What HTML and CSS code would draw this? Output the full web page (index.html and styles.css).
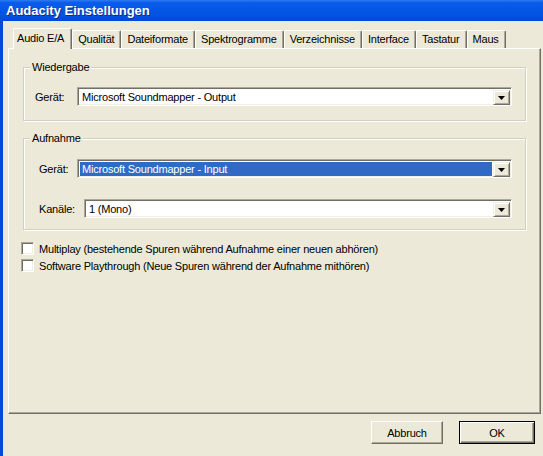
FILE: index.html
```html
<!DOCTYPE html>
<html lang="de">
<head>
<meta charset="utf-8">
<title>Audacity Einstellungen</title>
<link rel="stylesheet" href="styles.css">
</head>
<body>
<div class="window">
  <div class="titlebar"><span class="title">Audacity Einstellungen</span></div>
  <div class="frame">
    <div class="client">
      <div class="tabs">
        <div class="tab active">Audio E/A</div>
        <div class="tab">Qualität</div>
        <div class="tab">Dateiformate</div>
        <div class="tab">Spektrogramme</div>
        <div class="tab">Verzeichnisse</div>
        <div class="tab">Interface</div>
        <div class="tab">Tastatur</div>
        <div class="tab">Maus</div>
      </div>
      <div class="panel">
        <div class="group group-play">
          <div class="legend">Wiedergabe</div>
          <div class="row row-play">
            <span class="label">Gerät:</span>
            <div class="combo">
              <span class="value">Microsoft Soundmapper - Output</span>
              <span class="drop"><svg width="7" height="4" viewBox="0 0 7 4"><path d="M0 0h7L3.5 4z" fill="#000"/></svg></span>
            </div>
          </div>
        </div>
        <div class="group group-rec">
          <div class="legend">Aufnahme</div>
          <div class="row row-rec">
            <span class="label">Gerät:</span>
            <div class="combo">
              <span class="value selected">Microsoft Soundmapper - Input</span>
              <span class="drop"><svg width="7" height="4" viewBox="0 0 7 4"><path d="M0 0h7L3.5 4z" fill="#000"/></svg></span>
            </div>
          </div>
          <div class="row row-chan">
            <span class="label">Kanäle:</span>
            <div class="combo">
              <span class="value">1 (Mono)</span>
              <span class="drop"><svg width="7" height="4" viewBox="0 0 7 4"><path d="M0 0h7L3.5 4z" fill="#000"/></svg></span>
            </div>
          </div>
        </div>
        <div class="checks">
          <div class="check"><span class="box"></span><span>Multiplay (bestehende Spuren während Aufnahme einer neuen abhören)</span></div>
          <div class="check"><span class="box"></span><span>Software Playthrough (Neue Spuren während der Aufnahme mithören)</span></div>
        </div>
      </div>
      <div class="buttons">
        <button class="btn btn-cancel">Abbruch</button>
        <button class="btn btn-ok">OK</button>
      </div>
    </div>
  </div>
</div>
</body>
</html>
```

FILE: styles.css
```css
* { box-sizing: border-box; }
html, body {
  margin: 0;
  padding: 0;
  background: #ECE9D8;
}
body {
  font-family: "Liberation Sans", Arial, sans-serif;
  font-size: 11px;
  letter-spacing: -0.2px;
  color: #000;
}
.window {
  width: 543px;
  height: 456px;
  overflow: hidden;
  display: flex;
  flex-direction: column;
}
.titlebar {
  height: 21px;
  flex: none;
  padding-left: 6px;
  background: linear-gradient(to bottom, #2F7BF2 0%, #0A5DEA 12%, #0657E6 40%, #0453E2 70%, #0348D6 100%);
  display: flex;
  align-items: center;
}
.title {
  color: #fff;
  font-family: "Liberation Sans", Arial, sans-serif;
  font-weight: bold;
  font-size: 13px;
  letter-spacing: 0;
  text-shadow: 1px 1px 0 #0A2A8C;
}
.frame {
  flex: 1;
  min-width: 0;
  display: flex;
  border-left: 3px solid #0A47D8;
}
.client {
  flex: 1;
  min-width: 0;
  padding: 7px 0 0 5px;
  display: flex;
  flex-direction: column;
}
.tabs {
  display: flex;
  align-items: flex-end;
  padding-left: 5px;
  height: 20px;
}
.tab {
  height: 18px;
  line-height: 17px;
  padding: 0 6px 0 5px;
  border-top: 1px solid #fff;
  border-left: 1px solid #fff;
  border-right: 1px solid #716F64;
  box-shadow: inset -1px 0 0 #ACA899;
  border-radius: 2px 2px 0 0;
  white-space: nowrap;
}
.tab.active {
  height: 21px;
  line-height: 19px;
  padding: 0 7px 0 3px;
  margin-bottom: -1px;
  background: #ECE9D8;
  position: relative;
  z-index: 1;
}
.panel {
  width: 533px;
  flex: none;
  height: 366px;
  border-top: 1px solid #fff;
  border-left: 1px solid #fff;
  border-right: 1px solid #716F64;
  border-bottom: 1px solid #716F64;
  box-shadow: inset -1px -1px 0 #ACA899;
  padding: 18px 14px 0 14px;
}
.group {
  border: 1px solid #D0D0BF;
  box-shadow: inset 1px 1px 0 #fff, 1px 1px 0 #fff;
}
.group-play {
  height: 54px;
}
.group-rec {
  height: 92px;
  margin-top: 17px;
}
.legend {
  width: fit-content;
  height: 13px;
  line-height: 13px;
  margin: -7px 0 0 6px;
  padding: 0 2px;
  background: #ECE9D8;
}
.row {
  display: flex;
  align-items: center;
  height: 19px;
  padding-right: 13px;
}
.row-play { margin-top: 13px; padding-left: 11px; }
.row-play .label { width: 42px; }
.row-rec { margin-top: 14px; padding-left: 15px; }
.row-rec .label { width: 38px; }
.row-chan { margin-top: 21px; padding-left: 15px; }
.row-chan .label { width: 45px; }
.combo {
  flex: 1;
  height: 19px;
  display: flex;
  background: #fff;
  border-top: 1px solid #ACA899;
  border-left: 1px solid #ACA899;
  border-right: 1px solid #fff;
  border-bottom: 1px solid #fff;
  box-shadow: inset 1px 1px 0 #716F64, inset -1px -1px 0 #F1EFE2;
  padding: 2px 1px 1px 2px;
}
.value {
  flex: 1;
  line-height: 15px;
  padding-left: 2px;
  white-space: nowrap;
}
.value.selected {
  background: #316AC5;
  color: #fff;
  margin-right: 1px;
}
.drop {
  width: 17px;
  height: 15px;
  background: #ECE9D8;
  border-top: 1px solid #F1EFE2;
  border-left: 1px solid #F1EFE2;
  border-right: 1px solid #716F64;
  border-bottom: 1px solid #716F64;
  box-shadow: inset 1px 1px 0 #fff, inset -1px -1px 0 #ACA899;
  display: flex;
  align-items: center;
  justify-content: center;
}
.drop svg { display: block; margin-top: 1px; }
.checks {
  margin-top: 12px;
  margin-left: -2px;
  display: flex;
  flex-direction: column;
  gap: 4px;
}
.check {
  display: flex;
  align-items: center;
  height: 13px;
  gap: 5px;
  white-space: nowrap;
}
.box {
  width: 13px;
  height: 13px;
  flex: none;
  background: #fff;
  border-top: 1px solid #ACA899;
  border-left: 1px solid #ACA899;
  border-right: 1px solid #fff;
  border-bottom: 1px solid #fff;
  box-shadow: inset 1px 1px 0 #716F64, inset -1px -1px 0 #F1EFE2;
}
.buttons {
  display: flex;
  justify-content: flex-end;
  gap: 16px;
  margin-top: 7px;
  padding-right: 8px;
}
.btn {
  height: 23px;
  font-family: "Liberation Sans", Arial, sans-serif;
  font-size: 11px;
  letter-spacing: -0.2px;
  color: #000;
  background: #ECE9D8;
  border-top: 1px solid #fff;
  border-left: 1px solid #fff;
  border-right: 1px solid #716F64;
  border-bottom: 1px solid #716F64;
  box-shadow: inset -1px -1px 0 #ACA899;
  padding: 0;
}
.btn-cancel { width: 72px; }
.btn-ok {
  width: 76px;
  border: 1px solid #000;
  box-shadow: inset 1px 1px 0 #fff, inset -1px -1px 0 #716F64, inset -2px -2px 0 #ACA899;
}
```
